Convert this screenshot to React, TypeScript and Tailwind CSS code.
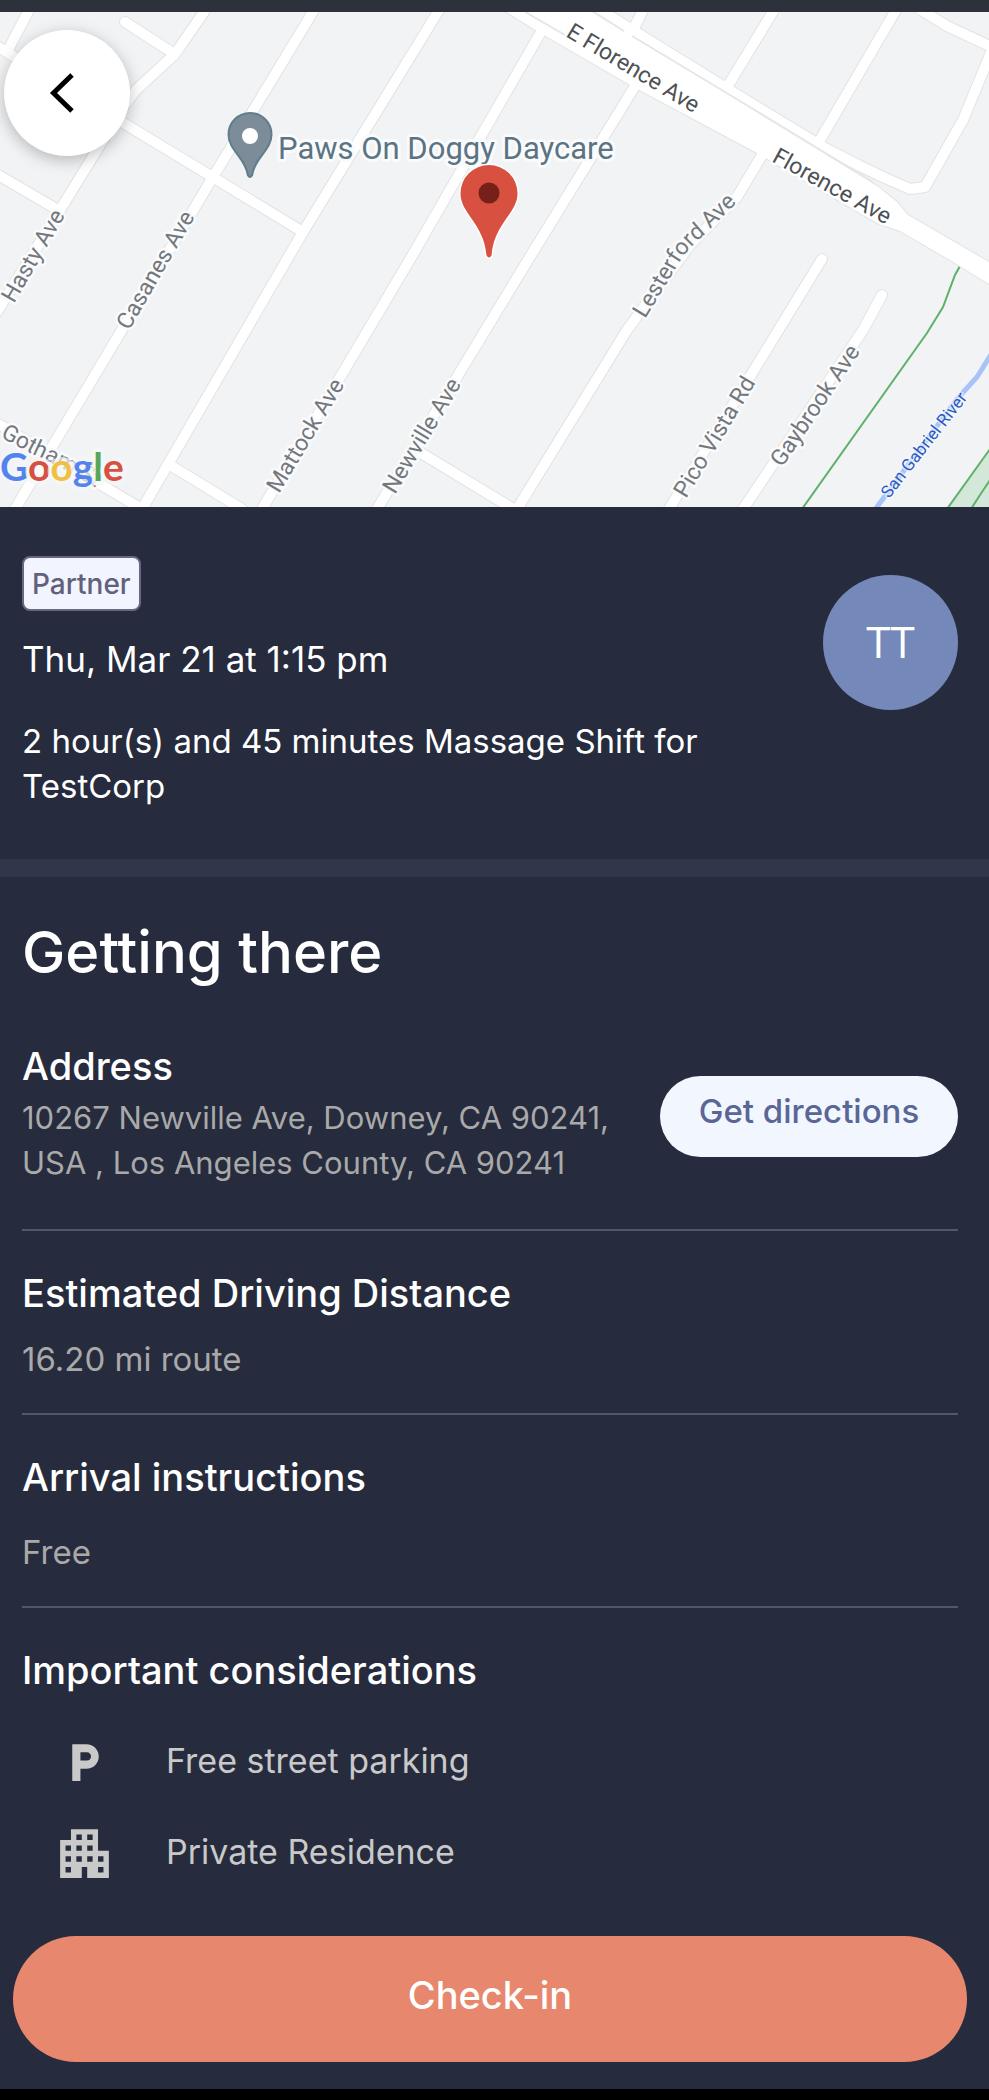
import type { ReactNode } from 'react';
import { MdApartment, MdLocalParking } from 'react-icons/md';

const roads = [
  'M28 12 L8 50',
  'M-5 45 L303 232',
  'M204 12 L175 54 L136 90 L124 106 L60 210 L-8 320',
  'M125 22 L173 53',
  'M-5 173 L58 210',
  'M314 10 L213 177 L15 509',
  'M439 10 L303 232 L142 509',
  'M545 25 L492 117 L412 256 L262 509',
  'M640 78 L528 260 L377 509',
  'M765 150 L737 197 L690 245 L627 330 L517 509',
  'M822 259 L669 509',
  'M882 295 L863 330 L853 345 L743 509',
  'M-5 422 L60 460 L140 508',
  'M170 465 L242 509',
  'M421 453 L515 510',
  'M643 10 L632 32',
  'M774 10 L729 84',
  'M896 10 L820 140',
  'M918 8 L947 26 L994 48',
  'M597 8 L723 86 L823 147 L860 166 L883 177 L910 189 L925 187 L963 120 L992 50',
];

const florence =
  'M500 8 L537 31 L630 85 L757 153 L877 223 L900 231 L950 260 L994 287 L994 265 L908 215 L897 202 L877 186 L592 11 Z';

const streets = [
  { name: 'Hasty Ave', x: 14, y: 304, angle: -60 },
  { name: 'Casanes Ave', x: 129, y: 331, angle: -60 },
  { name: 'Mattock Ave', x: 279, y: 494, angle: -59 },
  { name: 'Newville Ave', x: 395, y: 495, angle: -59 },
  { name: 'Pico Vista Rd', x: 686, y: 499, angle: -59 },
  { name: 'Gaybrook Ave', x: 782, y: 468, angle: -56 },
];

const avenues = [
  { name: 'E Florence Ave', x: 565, y: 36, angle: 31 },
  { name: 'Florence Ave', x: 771, y: 161, angle: 29 },
];

function StreetMap() {
  return (
    <svg
      viewBox="0 12 989 495"
      preserveAspectRatio="xMidYMid slice"
      className="block h-[495px] w-full bg-[#f1f3f5] font-['Roboto',sans-serif]"
      role="img"
      aria-label="Map of the shift location"
    >
      {/* Parkland and river */}
      <path d="M948 507 L989 450 V507 Z" fill="#d3e8d8" />
      <g fill="none" stroke="#5fb06b" strokeWidth="2">
        <path d="M960 266 L955 275 L943 307 L927 333 L802 509" />
        <path d="M947 509 L990 449" />
        <path d="M971 509 L980 495 L990 480" />
      </g>
      <path d="M992 353 L977 377 L957 399 L874 511" fill="none" stroke="#a8c3f8" strokeWidth="5" />

      {/* Road casings, then the roads on top */}
      <g fill="none" stroke="#e1e3e5" strokeWidth="12" strokeLinecap="round" strokeLinejoin="round">
        {roads.map((d) => (
          <path key={d} d={d} />
        ))}
      </g>
      <path d={florence} fill="#fff" stroke="#e1e3e5" strokeWidth="2" />
      <g fill="none" stroke="#fff" strokeWidth="10" strokeLinecap="round" strokeLinejoin="round">
        {roads.map((d) => (
          <path key={d} d={d} />
        ))}
      </g>
      <path d={florence} fill="#fff" />
      <path d="M592 11 L624 31 M632 36 L730 95 L873 182 M525 12 L565 35" fill="none" stroke="#e4e6e8" strokeWidth="2" />

      {/* Labels */}
      <g fontSize="23" fill="#74787c" stroke="#fafbfc" strokeWidth="5" strokeLinejoin="round" paintOrder="stroke">
        {streets.map((s) => (
          <text key={s.name} transform={`translate(${s.x} ${s.y}) rotate(${s.angle})`}>
            {s.name}
          </text>
        ))}
        <path id="lesterford" d="M645 319 L676 268 Q686 250 703 236 L764 176" fill="none" stroke="none" />
        <text>
          <textPath href="#lesterford">Lesterford Ave</textPath>
        </text>
        <path id="gotham" d="M0 437 L30 453 Q62 467 110 496" fill="none" stroke="none" />
        <text>
          <textPath href="#gotham">Gotham St</textPath>
        </text>
      </g>
      <g fontSize="23" fill="#4d5155" stroke="#fff" strokeWidth="5" strokeLinejoin="round" paintOrder="stroke">
        {avenues.map((s) => (
          <text key={s.name} transform={`translate(${s.x} ${s.y}) rotate(${s.angle})`}>
            {s.name}
          </text>
        ))}
      </g>
      <text
        transform="translate(889 499) rotate(-52)"
        fontSize="17"
        fill="#2a5bc4"
        stroke="#fafbfc"
        strokeOpacity="0.6"
        strokeWidth="3"
        paintOrder="stroke"
      >
        San Gabriel River
      </text>
      <text x="278" y="159" fontSize="31" fill="#5b7483" stroke="#fafbfc" strokeWidth="6" strokeLinejoin="round" paintOrder="stroke">
        Paws On Doggy Daycare
      </text>

      {/* Business pin */}
      <path
        d="M250 113 a21.500 21.500 0 0 1 21.500 21.500 c0 16 -17 23 -19.500 41 q-2 3 -4 0 c-2.500 -18 -19.500 -25 -19.500 -41 a21.500 21.500 0 0 1 21.500 -21.500 Z"
        fill="#7c8c98"
        stroke="#607d8b"
        strokeWidth="2"
      />
      <circle cx="250" cy="136" r="8" fill="#fff" />

      {/* Location pin */}
      <path
        d="M489 165 a28.500 28.500 0 0 1 28.500 28.500 c0 20 -23.500 30 -26 62 q-2.500 4 -5 0 c-2.500 -32 -26 -42 -26 -62 a28.500 28.500 0 0 1 28.500 -28.500 Z"
        fill="#d85140"
        stroke="#fff"
        strokeWidth="3"
        paintOrder="stroke"
      />
      <circle cx="489" cy="193" r="10.500" fill="#75211a" />

      <text
        x="0"
        y="481"
        fontSize="39"
        className="font-['Lato',sans-serif] font-bold"
        stroke="#f6f7f8"
        strokeOpacity="0.7"
        strokeWidth="8"
        strokeLinejoin="round"
        paintOrder="stroke"
      >
        <tspan fill="#5384ee">G</tspan>
        <tspan fill="#d85140">o</tspan>
        <tspan fill="#f1bf42">o</tspan>
        <tspan fill="#5384ee">g</tspan>
        <tspan fill="#58a55c">l</tspan>
        <tspan fill="#d85140">e</tspan>
      </text>
    </svg>
  );
}

function BackButton() {
  return (
    <button
      type="button"
      aria-label="Back"
      className="absolute top-[18px] left-1 flex size-[126px] items-center justify-center rounded-full bg-white shadow-[0_4px_16px_rgba(0,0,0,0.25)]"
    >
      <svg viewBox="0 0 126 126" className="size-[126px]" fill="none" stroke="#000" strokeWidth="5">
        <path d="M68 45 L49.500 63 L68 81" />
      </svg>
    </button>
  );
}

function InfoTitle({ children }: { children: ReactNode }) {
  return <h3 className="text-[38px] leading-[54px] font-medium text-white">{children}</h3>;
}

function Consideration({ icon, label }: { icon: ReactNode; label: string }) {
  return (
    <li className="flex h-[91px] items-center text-[#c9c9c9]">
      <span className="mr-5 flex w-[124px] justify-center">{icon}</span>
      <span className="pb-1 text-[34px] leading-[45px]">{label}</span>
    </li>
  );
}

export default function App() {
  return (
    <div className="min-h-screen bg-black font-['Inter',sans-serif]">
      <div className="h-3 bg-[#2d313b]" />

      <main className="bg-[#262b3d]">
        <div className="relative">
          <StreetMap />
          <BackButton />
        </div>

        <section className="flex items-start justify-between gap-16 border-b-[18px] border-[#31364b] pt-[49px] pr-[31px] pb-[50px] pl-[22px] text-white">
          <div>
            <span className="inline-flex h-[55px] items-center rounded-lg border-2 border-[#67677f] bg-[#f2f5ff] px-2 text-[28px] font-medium text-[#62617b]">
              Partner
            </span>
            <p className="mt-[21px] text-[35px] leading-[54px]">Thu, Mar 21 at 1:15 pm</p>
            <p className="mt-[33px] text-[33px] leading-[45px]">
              2 hour(s) and 45 minutes Massage Shift for TestCorp
            </p>
          </div>
          <div className="mt-[19px] flex size-[135px] shrink-0 items-center justify-center rounded-full bg-[#7488b9] pb-1 font-['Open_Sans',sans-serif] text-[44px]">
            TT
          </div>
        </section>

        <section className="pt-[39px] pr-[31px] pl-[22px] text-[#a9a9a9]">
          <h2 className="text-[58px] leading-[72px] font-medium text-white">Getting there</h2>

          <div className="mt-[51px] flex items-center justify-between gap-8 border-b-2 border-[#4d586b] pb-[44px]">
            <div>
              <InfoTitle>Address</InfoTitle>
              <p className="mt-0.5 text-[31px] leading-[45px]">
                10267 Newville Ave, Downey, CA 90241, USA , Los Angeles County, CA 90241
              </p>
            </div>
            <button
              type="button"
              className="mt-2 h-[81px] w-[298px] shrink-0 rounded-full bg-[#f2f6ff] pb-2 text-[33px] font-medium text-[#5a6696]"
            >
              Get directions
            </button>
          </div>

          <div className="border-b-2 border-[#4d586b] pt-[35px] pb-[31px]">
            <InfoTitle>Estimated Driving Distance</InfoTitle>
            <p className="mt-[17px] text-[33px] leading-[45px]">16.20 mi route</p>
          </div>

          <div className="border-b-2 border-[#4d586b] pt-[35px] pb-[31px]">
            <InfoTitle>Arrival instructions</InfoTitle>
            <p className="mt-[26px] text-[33px] leading-[45px]">Free</p>
          </div>

          <div className="pt-[35px]">
            <InfoTitle>Important considerations</InfoTitle>
            <ul className="mt-5">
              <Consideration icon={<MdLocalParking size={49} />} label="Free street parking" />
              <Consideration icon={<MdApartment size={65} />} label="Private Residence" />
            </ul>
          </div>
        </section>

        <div className="pt-[37px] pr-[22px] pb-[27px] pl-[13px]">
          <button
            type="button"
            className="h-[126px] w-full rounded-full bg-[#e7886e] pb-2 text-[38px] font-medium text-white"
          >
            Check-in
          </button>
        </div>
      </main>
    </div>
  );
}
